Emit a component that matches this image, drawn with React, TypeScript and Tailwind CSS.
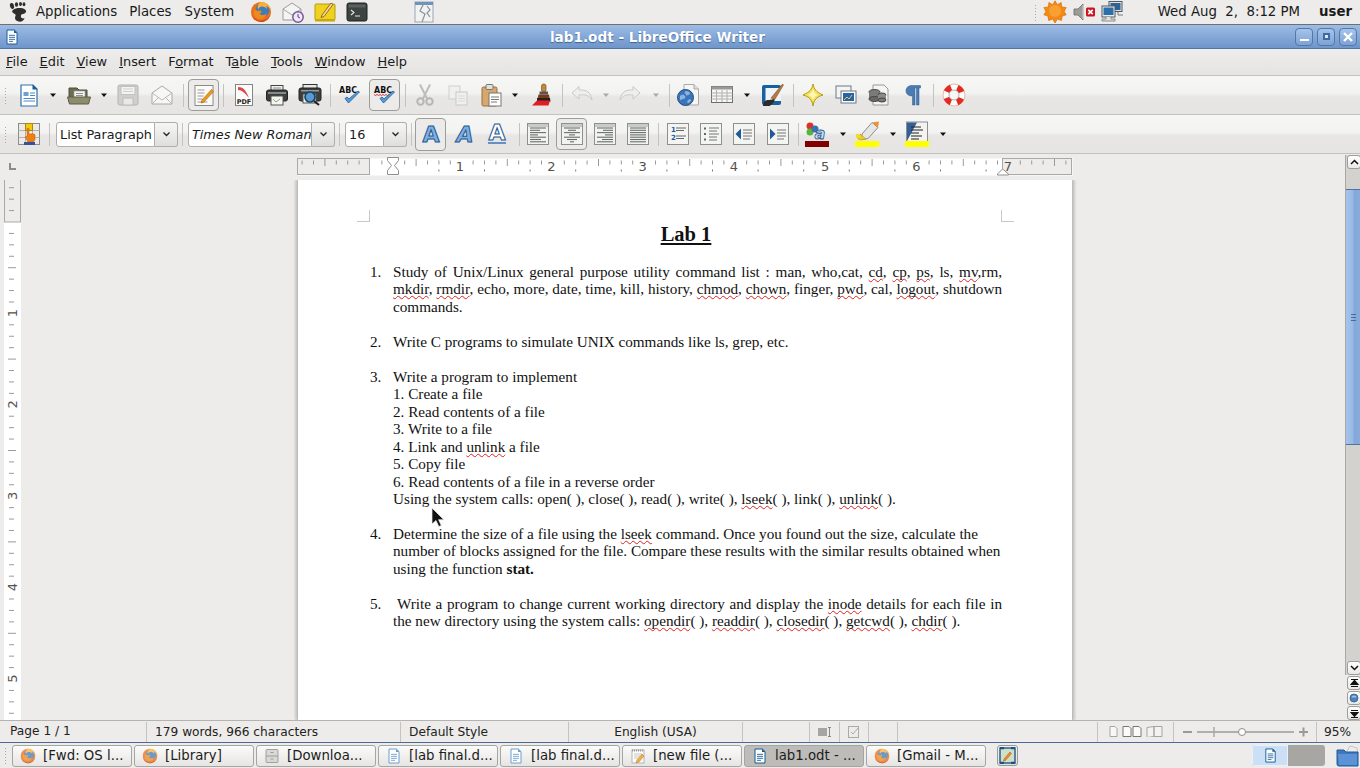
import React from "react";

type P = { className?: string };
const S = ({ className = "", size = 24, children }: { className?: string; size?: number; children: React.ReactNode }) => (
  <svg viewBox="0 0 24 24" width={size} height={size} className={"shrink-0 " + className}>{children}</svg>
);

const Foot = () => (
  <svg viewBox="0 0 20 22" width="20" height="22" className="shrink-0">
    <g fill="#2e2e2c">
      <ellipse cx="3" cy="5" rx="2" ry="3" transform="rotate(-15 3 5)" />
      <ellipse cx="7.5" cy="3.5" rx="1.6" ry="2.3" />
      <ellipse cx="11.5" cy="3" rx="1.5" ry="2.1" />
      <ellipse cx="15" cy="3.2" rx="1.4" ry="2" />
      <path d="M4 9c3-2.5 9-2.5 12-.5 2 1.5 1 4-2 4.5-1.5.3-2.5 1-2 3 .4 1.6 2.5 1.7 3.5 1-.3 2.5-3 4.2-6 3.5-3.5-.8-4-3.5-3-5.5.7-1.4-.5-2-1.5-2.5C3 11.5 2.5 10 4 9z" />
    </g>
  </svg>
);
const Firefox = ({ size = 24, muted = false }: { size?: number; muted?: boolean }) => (
  <svg viewBox="0 0 24 24" width={size} height={size} className={"shrink-0 " + (muted ? "opacity-75" : "")}>
    <circle cx="12" cy="12" r="11" fill="#e8701a" />
    <circle cx="13.500" cy="10" r="7.500" fill="#3f7cbc" />
    <path d="M12 1a11 11 0 0 1 11 9.500c-1.500-3-3.500-4.500-5.500-5 .8 1 1 2 .8 3-1.500-2-3.500-3-6-2.500C10.500 6.500 9 8 9 9.500 7.500 6 8.600 3 12 1z" fill="#f6b23a" />
    <path d="M5 9c2 2 4.500 2 6.500 1.300 1.800 1 .8 3-.8 3.200 1 2.300 5 2.500 7.300 0-.5 4.500-5 7-9 5.800C4.500 18 3 13 5 9z" fill="#f08a1d" />
    <path d="M1.500 15c2 6 8.500 9 13.500 7.500 3.500-1 6-4 7-7.500-2 4-5.500 6.500-10 6.500-4.500 0-8.500-2.500-10.500-6.500z" fill="#c9431a" />
  </svg>
);
const DocIcon = ({ size = 24, stroke = "#1f6aa8", fill = "#fff" }: { size?: number; stroke?: string; fill?: string }) => (
  <S size={size}>
    <path d="M4.500 1.500h11l4 4v17h-15z" fill={fill} stroke={stroke} strokeWidth="1.500" />
    <path d="M15 1l5 5h-5z" fill={stroke} />
    <path d="M7.500 9.500h9M7.500 12.500h9M7.500 15.500h9M7.500 18.500h6" stroke={stroke} strokeWidth="1.300" />
  </S>
);
const MailClock = () => (
  <S>
    <path d="M2 9l9-6 9 6v11H2z" fill="#f4f4f2" stroke="#9a9a98" />
    <path d="M2 9l9 6 9-6" fill="none" stroke="#a5a5a3" />
    <circle cx="17" cy="17" r="5.200" fill="#efe9f5" stroke="#77589c" strokeWidth="1.500" />
    <path d="M17 14v3l2 1" stroke="#5a3f80" fill="none" />
  </S>
);
const NoteIcon = () => (
  <S>
    <rect x="2" y="4" width="20" height="16" rx="1" fill="#eed21f" stroke="#b59c10" />
    <rect x="2" y="19" width="20" height="2.500" fill="#c9a80f" />
    <path d="M9 15l9-12 2 1.500-9 12-3 1z" fill="#f6d98a" stroke="#8f5b22" strokeWidth=".9" />
  </S>
);
const Terminal = () => (
  <S>
    <rect x="2" y="3" width="20" height="18" rx="2" fill="#3d4341" stroke="#1f2322" />
    <rect x="3.500" y="4.500" width="17" height="3" fill="#5b615f" />
    <path d="M6 10l3 2.500-3 2.500M10 16h5" stroke="#e8e8e8" strokeWidth="1.100" fill="none" />
  </S>
);
const WinSwitch = () => (
  <S>
    <rect x="3" y="2" width="18" height="20" fill="#f2f2f0" stroke="#9aa6b4" />
    <rect x="3" y="2" width="18" height="3" fill="#6f93bd" />
    <path d="M12 3L8 11l5 3-3 8M15 6l3 4-3 3 3 4" fill="none" stroke="#8592a0" strokeWidth="1.200" />
  </S>
);
const Sun = () => (
  <S>
    <path d="M12 .8l2.300 4 3.900-2.300.5 4.500 4.500.5-2 4 2 3.300-4 1.200-.8 4.500-4-1.500L12 23l-2.300-4-4 1.500-.8-4.500-4-1.200 2-3.300-2-4 4.500-.5.500-4.500 3.900 2.300z" fill="#f28a14" stroke="#d96f08" strokeWidth=".7" />
    <circle cx="12" cy="11" r="6" fill="#f8a030" />
  </S>
);
const Mute = () => (
  <svg width="24" height="22" viewBox="0 0 24 22" className="shrink-0">
    <path d="M1 8h4l5-5v16l-5-5H1z" fill="#9c9c98" stroke="#6a6a68" strokeWidth=".8" />
    <path d="M10 4v14" stroke="#ddd" />
    <rect x="13" y="6.500" width="9" height="9" rx="1.500" fill="#cc1420" />
    <path d="M15.300 8.800l4.400 4.400M19.700 8.800l-4.400 4.400" stroke="#fff" strokeWidth="1.700" />
  </svg>
);
const Net = () => (
  <S>
    <rect x="8" y="1.500" width="13" height="10" fill="#dfe3e6" stroke="#55585a" />
    <rect x="9.500" y="3" width="10" height="7" fill="#2d6399" />
    <rect x="1" y="6" width="13" height="11" fill="#eceded" stroke="#55585a" />
    <rect x="2.500" y="7.500" width="10" height="7.500" fill="#2d6fa9" />
    <path d="M5 17v2H1v2h13v-2h-4v-2" fill="#e0e0de" stroke="#77797a" strokeWidth=".8" />
    <path d="M17 12v3h5" fill="none" stroke="#77797a" />
  </S>
);

const Grip = ({ className = "" }: P) => (
  <div className={"w-[3px] h-[17px] shrink-0 bg-[radial-gradient(#aaa9a6_0.6px,transparent_0.8px)] bg-[length:3px_3px] " + className} />
);
const Sep = ({ className = "" }: P) => <div className={"w-px h-[23px] bg-[#c4c3c0] shrink-0 " + className} />;
const Arrow = ({ className = "", off = false }: P & { off?: boolean }) => (
  <svg width="8" height="5" viewBox="0 0 8 5" className={"shrink-0 " + className}>
    <path d="M1 0.500h6L4 4z" fill={off ? "#a9a9a7" : "#111"} />
  </svg>
);

const NewDoc = () => (
  <S>
    <path d="M4 2h12l4 4v17H4z" fill="#fff" stroke="#2e70ad" strokeWidth="1.200" />
    <path d="M15.500 1.500l5 5h-5z" fill="#1b5c95" />
    <rect x="6.500" y="9" width="5" height="4" fill="#6da0d0" />
    <path d="M13 10h5M13 12.500h5M6.500 15.500h11.500M6.500 18h11.500" stroke="#4b8bc5" strokeWidth="1.100" />
  </S>
);
const OpenF = () => (
  <S>
    <path d="M2 5h8l2 2h8v12H2z" fill="#6d6d55" stroke="#4e4e3a" />
    <rect x="7" y="8" width="11" height="8" fill="#f4f4f2" stroke="#999" strokeWidth=".6" />
    <path d="M9 10.500h7M9 12.500h7" stroke="#777" strokeWidth=".8" />
    <path d="M.5 14h23l-2 7H2.500z" fill="#8c8c6e" stroke="#5d5d47" />
  </S>
);
const Save = () => (
  <S>
    <rect x="2" y="2" width="20" height="20" rx="2" fill="#cfcfcd" stroke="#b4b4b2" />
    <rect x="5" y="3.500" width="14" height="8" fill="#f3f3f1" stroke="#c2c2c0" />
    <path d="M7 6h10M7 8.500h10" stroke="#d0d0ce" />
    <rect x="7" y="15" width="10" height="7" fill="#e8e8e6" stroke="#bcbcba" />
  </S>
);
const MailS = () => (
  <S>
    <path d="M2 10l10-7 10 7v11H2z" fill="#f7f7f5" stroke="#a8a8a6" />
    <path d="M2 10l10 7 10-7M2 21l7-7M22 21l-7-7" fill="none" stroke="#b8b8b6" />
  </S>
);
const EditDoc = () => (
  <S>
    <rect x="3" y="2.500" width="18" height="20" fill="#fbfbfa" stroke="#8a8a88" />
    <path d="M5.500 7h7M5.500 10h7M5.500 13h6M5.500 16h5M5.500 19h10" stroke="#9b9b99" />
    <path d="M10 17l9.500-10.500 2 2L12 19l-3 1z" fill="#f09a1d" stroke="#a65d0c" strokeWidth=".6" />
  </S>
);
const Pdf = () => (
  <S>
    <rect x="3.500" y="1.500" width="17" height="21" fill="#fcfcfb" stroke="#858583" />
    <path d="M6 4c5 0 8 3 11 11-4-5-7-8-11-8z" fill="#d8242c" opacity=".85" />
    <text x="12" y="20.500" fontSize="6.500" fontWeight="700" textAnchor="middle" fontFamily="DejaVu Sans" fill="#222">PDF</text>
  </S>
);
const Printer = () => (
  <S>
    <rect x="6" y="2.500" width="12" height="7" fill="#f1f1ef" stroke="#444" />
    <path d="M8 5h8" stroke="#888" />
    <rect x="1.500" y="7" width="21" height="11" rx="2" fill="#3b3f3e" stroke="#232525" />
    <rect x="3" y="9" width="18" height="2" fill="#868a88" />
    <rect x="6" y="13" width="12" height="9" fill="#f4f4f2" stroke="#555" />
    <path d="M8 16l3 3 4-3" fill="none" stroke="#7fae6e" />
  </S>
);
const Preview = () => (
  <S>
    <rect x="5" y="1.500" width="14" height="6" fill="#e8e8e6" stroke="#333" />
    <rect x="1" y="5" width="22" height="13" rx="2" fill="#3b3f3e" stroke="#232525" />
    <rect x="3" y="7" width="18" height="1.500" fill="#969a98" />
    <rect x="5" y="11" width="13" height="9" fill="#f4f4f2" stroke="#555" />
    <circle cx="12" cy="14" r="5" fill="#5b9ad0" stroke="#14476f" strokeWidth="1.700" />
    <path d="M16 18l5 4" stroke="#222" strokeWidth="2.200" />
  </S>
);
const Spell = ({ wave = false }: { wave?: boolean }) => (
  <S>
    <text x="10" y="9.500" fontSize="9.500" fontWeight="700" textAnchor="middle" fontFamily="DejaVu Sans" fill="#111" textLength="18" lengthAdjust="spacingAndGlyphs">ABC</text>
    {wave && <path d="M1 11.500l1.500 1 1.500-1 1.500 1 1.500-1 1.500 1 1.500-1 1.500 1 1.500-1 1.500 1 1.500-1" fill="none" stroke="#d22" strokeWidth=".9" />}
    <path d="M7 15.500l3.500 4.500 11-11-1.500-1-9 8-2-2z" fill="#5b9bd8" stroke="#1d5a98" strokeWidth=".8" />
  </S>
);
const Cut = () => (
  <S>
    <path d="M7 1.500l7 14M17 1.500l-7 14" stroke="#bdbdbb" strokeWidth="2" />
    <circle cx="7.500" cy="18.500" r="3.200" fill="none" stroke="#b5b5b3" strokeWidth="2" />
    <circle cx="16.500" cy="18.500" r="3.200" fill="none" stroke="#b5b5b3" strokeWidth="2" />
  </S>
);
const Copy = () => (
  <S>
    <rect x="3" y="3" width="11" height="13" fill="#f0f0ee" stroke="#cfcfcd" />
    <rect x="10" y="9" width="11" height="13" fill="#f0f0ee" stroke="#c8c8c6" />
    <path d="M12 13h7M12 15.500h7M12 18h7" stroke="#d8d8d6" />
  </S>
);
const Paste = () => (
  <S>
    <rect x="3" y="4" width="15" height="19" rx="1.500" fill="#d6a86c" stroke="#96703c" />
    <rect x="7" y="1.500" width="7" height="5" rx="1" fill="#e0e0dc" stroke="#777" />
    <rect x="10" y="10" width="12" height="13" fill="#fff" stroke="#777" />
    <path d="M12 14h8M12 16.500h8M12 19h6" stroke="#777" />
  </S>
);
const Brush = () => (
  <S>
    <rect x="11.500" y="1" width="4.500" height="8" rx="2" fill="#c08a3e" stroke="#7b5520" strokeWidth=".7" />
    <rect x="9.500" y="8.500" width="8.500" height="3" fill="#565656" />
    <path d="M8.500 11.500h10.500l1 7H7z" fill="#7a3a1a" />
    <path d="M7 15h13l.5 3.500H7z" fill="#222" />
    <path d="M2 22.500l5-5h13l-1.500 5z" fill="#e11c22" />
  </S>
);
const Undo = ({ flip = false }: { flip?: boolean }) => (
  <S>
    <g transform={flip ? "translate(24 0) scale(-1 1)" : undefined}>
      <path d="M2 10l7-6.500V7c7-.5 12 2 13 10-3-5-7-5.500-13-5v4z" fill="#efefed" stroke="#c9c9c7" />
    </g>
  </S>
);
const Globe = () => (
  <S>
    <path d="M8 1.500h10l4.500 4.500v16H8z" fill="#f6f6f4" stroke="#aaa" />
    <path d="M18 1.500V6h4.500" fill="#ddd" stroke="#aaa" />
    <circle cx="9.500" cy="14.500" r="8" fill="#3b74b8" stroke="#214c84" />
    <path d="M4 13c2-2 4-1 5 0s0 3-2 3-2 2-3 1zM10 8c2 0 4 1 4 2.500s-2 1-3 2-1-2-2-2 0-2 1-2.500zM12 17c1-1 3-1 3 0s-2 3-3 3-1-2 0-3z" fill="#8fb3dc" />
  </S>
);
const TableI = () => (
  <S>
    <rect x="1.500" y="3.500" width="21" height="16" fill="#f6f6f3" stroke="#6e6e6c" />
    <rect x="1.500" y="3.500" width="21" height="3" fill="#9a9a98" />
    <path d="M1.500 10h21M1.500 13h21M1.500 16h21M6.500 7v12M12 7v12M17 7v12" stroke="#b0b0ae" />
  </S>
);
const Draw = () => (
  <S>
    <rect x="2" y="2" width="19" height="20" rx="2" fill="#1a5fa0" />
    <rect x="5.500" y="5" width="15.500" height="13" fill="#eef3f8" />
    <path d="M11 15L22.500 1l1 1-9 15z" fill="#b57a3c" stroke="#72491e" strokeWidth=".5" />
    <path d="M3 23c0-4 3-6 5-6 3 0 6-1 6-1l.5 2c-2 2-2.500 4-5 5H3z" fill="#2b2b2b" />
  </S>
);
const Star = () => (
  <S>
    <path d="M12 1c1 5 3 8 10 11-7 2-9 5-10 11-1-6-3-9-10-11 7-3 9-6 10-11z" fill="#f5e15c" stroke="#b59a14" />
    <path d="M12 6c.7 3 1.800 4.500 5 6-3 1-4.300 2.500-5 5.500-.7-3-2-4.500-5-5.500 3.200-1.500 4.300-3 5-6z" fill="#fdf6b5" />
  </S>
);
const Nav = () => (
  <S>
    <rect x="2" y="3" width="15" height="12" fill="#f4f4f2" stroke="#6c7a86" />
    <rect x="7" y="8" width="15" height="12" fill="#fbfbfa" stroke="#6c7a86" />
    <rect x="9" y="10" width="11" height="8" fill="#2664a6" />
    <path d="M10 17l3-3 2 2 3-4" stroke="#f2c94c" fill="none" />
  </S>
);
const Db = () => (
  <S>
    <path d="M6 2h11l4 4v16H6z" fill="#f5f5f3" stroke="#999" />
    <ellipse cx="7.500" cy="9" rx="5.500" ry="2.500" fill="#7a7a78" stroke="#444" />
    <rect x="2" y="9" width="11" height="7" fill="#7a7a78" />
    <ellipse cx="7.500" cy="16" rx="5.500" ry="2.500" fill="#666" stroke="#444" />
    <ellipse cx="15" cy="12" rx="4" ry="2" fill="#8a8a88" stroke="#444" />
    <rect x="11" y="12" width="8" height="5" fill="#8a8a88" />
    <ellipse cx="15" cy="17" rx="4" ry="2" fill="#777" stroke="#444" />
  </S>
);
const Pilcrow = () => (
  <S>
    <path d="M11 2.500h8.500V5H18v17h-2.500V5h-1.500v17h-2.500v-9C8 13 5 11.500 5 7.800S8 2.500 11 2.500z" fill="#4a7cb2" stroke="#2a5a8e" strokeWidth=".5" />
  </S>
);
const Help = () => (
  <S>
    <circle cx="12" cy="12" r="11" fill="#fff" stroke="#e8b9a2" strokeWidth="1" />
    <circle cx="12" cy="12" r="8" fill="none" stroke="#e32a20" strokeWidth="6" strokeDasharray="6.280 6.280" strokeDashoffset="3.140" transform="rotate(45 12 12)" />
    <circle cx="12" cy="12" r="5" fill="#f6f6f4" stroke="#999" strokeWidth=".8" />
  </S>
);
const Styles = () => (
  <S>
    <rect x="1.500" y="1.500" width="21" height="21" fill="#eceae6" stroke="#8c8c8a" />
    <path d="M1.500 8.500h21M1.500 15.500h21M8.500 1.500v21M15.500 1.500v21" stroke="#b2b2b0" />
    <rect x="8.500" y="1.500" width="7" height="7" fill="#f1c812" stroke="#a68a08" />
    <path d="M10 9V6.500h2V12h2l1-.5 3 1v5l-1.500 2.500H11L8 15l1-1 1 1z" fill="#f07e16" stroke="#b85c0a" strokeWidth=".5" />
    <rect x="7" y="20" width="11" height="3" fill="#33549a" />
  </S>
);
const BigA = ({ kind }: { kind: "n" | "i" | "u" }) => (
  <S>
    <text x="12" y={kind === "u" ? "18" : "20"} fontSize="22" fontWeight="700" textAnchor="middle" fontFamily="DejaVu Sans" fontStyle={kind === "i" ? "italic" : "normal"} fill={kind === "u" ? "#fff" : "#7fb0e2"} stroke="#23578f" strokeWidth="1">A</text>
    {kind === "u" && <path d="M3 21h18" stroke="#3a76b5" strokeWidth="1.500" />}
  </S>
);
const AlignI = ({ rows }: { rows: [number, number][] }) => (
  <svg width="24" height="24" viewBox="0 0 24 24" className="shrink-0">
    <rect x="1.500" y="1.500" width="21" height="21" fill="#f1f3f0" stroke="#8f8f8d" />
    <rect x="2" y="2" width="20" height="3" fill="#c9cbc8" />
    {rows.map(([a, b], i) => (
      <path key={i} d={`M${a} ${6 + i * 2.3}H${b}`} stroke="#6a6d6b" strokeWidth="1.100" />
    ))}
  </svg>
);
const L: [number, number][] = [[4, 20], [4, 14], [4, 20], [4, 12], [4, 20], [4, 15], [4, 20]];
const C: [number, number][] = [[4, 20], [8, 16], [4, 20], [9, 15], [4, 20], [7, 17], [10, 14]];
const R: [number, number][] = [[4, 20], [10, 20], [4, 20], [12, 20], [4, 20], [9, 20], [4, 20]];
const J: [number, number][] = [[4, 20], [4, 20], [4, 20], [4, 20], [4, 20], [4, 20], [4, 20]];
const ListI = ({ kind }: { kind: "num" | "bul" | "out" | "in" }) => (
  <svg width="24" height="24" viewBox="0 0 24 24" className="shrink-0">
    <rect x="1.500" y="1.500" width="21" height="21" fill="#f3f5f2" stroke="#8f8f8d" />
    {kind === "num" && (
      <g>
        <text x="5" y="10" fontSize="7" fontWeight="700" fontFamily="DejaVu Sans" fill="#1f5a96">1</text>
        <text x="5" y="18" fontSize="7" fontWeight="700" fontFamily="DejaVu Sans" fill="#1f5a96">2</text>
        <path d="M10 6h10M10 8.500h8M10 14h10M10 16.500h8" stroke="#666" />
      </g>
    )}
    {kind === "bul" && (
      <g>
        <path d="M5 6.500h2M5 12h2M5 17.500h2" stroke="#666" strokeWidth="2" />
        <path d="M10 6h10M10 9h8M10 12h10M10 15h8M10 18h8" stroke="#777" />
      </g>
    )}
    {kind === "out" && (
      <g>
        <path d="M9 6.500v11L3.500 12z" fill="#1f5a96" />
        <path d="M11 8h9M11 11h9M11 14h9M11 17h7" stroke="#777" />
      </g>
    )}
    {kind === "in" && (
      <g>
        <path d="M4 6.500v11L9.500 12z" fill="#1f5a96" />
        <path d="M11 8h9M11 11h9M11 14h9M11 17h7" stroke="#777" />
      </g>
    )}
  </svg>
);
const FontColor = () => (
  <svg width="24" height="26" viewBox="0 0 24 26" className="shrink-0">
    <circle cx="5" cy="5" r="3.500" fill="#d5342c" />
    <circle cx="5" cy="11" r="3.500" fill="#5bb43a" />
    <circle cx="10" cy="8" r="3.500" fill="#3c72b5" />
    <text x="15" y="18" fontSize="16" fontWeight="700" textAnchor="middle" fontFamily="DejaVu Sans" fontStyle="italic" fill="#cfe0f2" stroke="#2a5a92" strokeWidth=".8">a</text>
    <rect x="0" y="20" width="24" height="6" fill="#800000" />
  </svg>
);
const Highlight = () => (
  <svg width="24" height="26" viewBox="0 0 24 26" className="shrink-0">
    <path d="M7 13L17 1.500l6 5-10 11-6 1z" fill="#e6e6e4" stroke="#8d8d8b" />
    <path d="M17 1.500l6 5 1-6z" fill="#f09030" />
    <path d="M5 13l6 5-5 1-3-1z" fill="#e8c930" stroke="#b3980e" strokeWidth=".6" />
    <rect x="1" y="13" width="4" height="4" fill="#f0dc20" />
    <rect x="0" y="20" width="24" height="6" fill="#ffff00" />
  </svg>
);
const BgColor = () => (
  <svg width="24" height="26" viewBox="0 0 24 26" className="shrink-0">
    <rect x="1.500" y="1" width="21" height="22" fill="#f3f3f1" stroke="#8f8f8d" />
    <path d="M2 1.500h10L2 20z" fill="#33609a" />
    <path d="M6 6h10M6 9h12M6 12h8M6 15h11M6 18h8" stroke="#222" strokeWidth="1.100" />
    <rect x="0" y="20" width="24" height="6" fill="#ffff00" />
  </svg>
);

const Combo = ({ text, className, italic = false }: { text: string; className: string; italic?: boolean }) => (
  <div className={"flex h-[25px] shrink-0 " + className}>
    <div className={"flex-1 min-w-0 overflow-hidden whitespace-nowrap bg-white border border-[#aeaeab] rounded-l-[3px] pl-[3px] text-[12.800px] leading-[23px] text-[#1a1a1a] " + (italic ? "italic" : "")}>{text}</div>
    <div className="w-[23px] flex items-center justify-center border border-l-0 border-[#aeaeab] rounded-r-[3px] bg-gradient-to-b from-[#f6f6f5] to-[#dededc]">
      <svg width="9" height="6" viewBox="0 0 9 6"><path d="M1.500 1.500L4.500 4.500 7.500 1.500" fill="none" stroke="#222" strokeWidth="1.300" /></svg>
    </div>
  </div>
);
const Pressed = ({ className = "", children }: P & { children: React.ReactNode }) => (
  <div className={"flex items-center justify-center shrink-0 rounded-[4px] border border-[#9c9c99] bg-[#ecebe9] " + className}>{children}</div>
);

const HRuler = () => {
  const ticks: React.ReactNode[] = [];
  const o = 73.5;
  const u = 91.2 / 8;
  for (let i = -6; i <= 62; i++) {
    const x = o + i * u;
    if (x < 3 || x > 772 || i % 8 === 0) continue;
    const half = i % 4 === 0;
    ticks.push(<path key={i} d={`M${x} ${half ? 5 : 6.500}V${half ? 12 : 10.500}`} stroke="#9a9a98" />);
  }
  const tabs = [];
  for (let i = 1; i <= 14; i++) {
    const x = o + 22.8 + (i - 1) * 45.6;
    tabs.push(<path key={i} d={`M${x} 15.500V17.500`} stroke="#777" />);
  }
  return (
    <svg width="776" height="22" viewBox="0 0 776 22" className="block shrink-0">
      <rect x="0.500" y="4.500" width="775" height="17" fill="#fff" stroke="none" />
      <rect x="0.500" y="4.500" width="72" height="16" fill="#edecea" stroke="#aaa9a6" />
      <rect x="705.500" y="4.500" width="69" height="16" fill="#edecea" stroke="#aaa9a6" />
      {ticks}
      {tabs}
      {[1, 2, 3, 4, 5, 6, 7].map((n, i) => (
        <text key={n} x={163 + i * 91.3} y="17" fontSize="13" textAnchor="middle" fontFamily="DejaVu Sans" fill="#55524e">{n}</text>
      ))}
      <path d="M90.500 3.500h11v3l-4 5 4 5v4h-11v-4l4-5-4-5z" fill="#fff" stroke="#8e8e8c" />
      <path d="M705.500 15l-5 5v1h11v-1z" fill="#fff" stroke="#8e8e8c" />
    </svg>
  );
};
const VRuler = () => {
  const ticks: React.ReactNode[] = [];
  const o = 42;
  const u = 91.4 / 8;
  for (let i = -3; i < 44; i++) {
    const y = o + i * u;
    if (i % 8 === 0) continue;
    const half = i % 4 === 0;
    ticks.push(<path key={i} d={`M${half ? 4 : 5} ${y}H${half ? 12 : 10}`} stroke="#9a9a98" />);
  }
  return (
    <svg width="17" height="540" viewBox="0 0 17 540" className="block shrink-0">
      <rect width="17" height="540" fill="#fff" />
      <rect x="0.500" y="-2" width="16" height="44" fill="#edecea" stroke="#aaa9a6" />
      {ticks}
      {[1, 2, 3, 4, 5].map((n, i) => (
        <text key={n} transform={`translate(12.500 ${133 + i * 91.4}) rotate(-90)`} fontSize="13" textAnchor="middle" fontFamily="DejaVu Sans" fill="#55524e">{n}</text>
      ))}
    </svg>
  );
};

const W = ({ children }: { children: React.ReactNode }) => (
  <span className="underline decoration-wavy decoration-[#dd2222] decoration-1 underline-offset-[1px] [text-decoration-skip-ink:none]">{children}</span>
);
const Just = ({ children }: { children: React.ReactNode }) => (
  <div className="text-justify [text-align-last:justify] whitespace-normal">{children}</div>
);
const Item = ({ n, children, className = "" }: { n: string; children: React.ReactNode; className?: string }) => (
  <div className={"flex " + className}>
    <div className="w-[23px] shrink-0">{n}</div>
    <div className="w-[609px] shrink-0">{children}</div>
  </div>
);

const ScrollBtn = ({ children, className = "" }: P & { children: React.ReactNode }) => (
  <div className={"h-[14px] w-[14px] ml-px shrink-0 flex items-center justify-center rounded-[3px] border border-[#9c9c99] bg-gradient-to-b from-white to-[#e8e8e6] " + className}>{children}</div>
);

const TaskBtn = ({ icon, label, active = false, className = "" }: { icon: React.ReactNode; label: string; active?: boolean; className?: string }) => (
  <div className={"w-[120px] h-[22px] shrink-0 rounded-[3px] border border-[#a5a5a2] flex items-center pl-[7px] " + (active ? "bg-[#bdbcb8] " : "bg-gradient-to-b from-[#fbfbfa] to-[#e6e5e3] ") + className}>
    <div className="w-[16px] h-[16px] flex items-center justify-center shrink-0">{icon}</div>
    <span className="ml-[7px] whitespace-nowrap text-[13.300px] leading-[20px] text-[#1c1c1c]">{label}</span>
  </div>
);

const FileCab = () => (
  <svg width="16" height="16" viewBox="0 0 16 16"><rect x="2" y="1.500" width="12" height="13" rx="1" fill="#d8d8d5" stroke="#a0a09d" /><path d="M2 8h12M6.500 4.500h3M6.500 11h3" stroke="#9a9a97" /></svg>
);
const Gedit = () => (
  <svg width="16" height="16" viewBox="0 0 16 16"><rect x="2" y="2" width="12" height="13" fill="#fbfbf9" stroke="#b4b4b2" /><path d="M2 2.500h12" stroke="#999" strokeDasharray="1 1" strokeWidth="2" /><path d="M4 6h8M4 8h6M4 10h4" stroke="#c9c9c6" /><path d="M7 12l5-6 2 2-5 6-3 1z" fill="#f2b04c" stroke="#b87414" strokeWidth=".5" /></svg>
);

function StatusCell({ className = "", children }: { className?: string; children?: React.ReactNode }) {
  return <div className={"h-[20px] shrink-0 border-l border-[#c4c3c0] leading-[20px] " + className}>{children}</div>;
}

export default function App() {
  return (
    <div className="relative w-[1360px] h-[768px] overflow-hidden flex flex-col bg-[#edecea] font-['DejaVu_Sans',sans-serif] text-[#1a1a1a]">
      <svg width="16" height="22" viewBox="0 0 16 22" className="absolute left-[431px] top-[507px] z-10">
        <path d="M1 1v16l4-3.500 2.800 6 2.500-1-2.700-5.800h5.200z" fill="#111" stroke="#eee" strokeWidth=".7" />
      </svg>
      {/* GNOME top panel */}
      <div className="h-[25px] shrink-0 flex items-center border-b border-[#6f6f6c] bg-[#edecea] text-[13.300px]">
        <div className="ml-[9px]"><Foot /></div>
        <span className="ml-[7px]">Applications</span>
        <span className="ml-[12px]">Places</span>
        <span className="ml-[13px]">System</span>
        <div className="ml-[16px]"><Firefox size={22} /></div>
        <div className="ml-[9px]"><MailClock /></div>
        <div className="ml-[8px]"><NoteIcon /></div>
        <div className="ml-[8px]"><Terminal /></div>
        <div className="ml-[43px]"><WinSwitch /></div>
        <div className="ml-auto flex items-center">
          <Grip />
          <div className="ml-[6px]"><Sun /></div>
          <div className="ml-[6px]"><Mute /></div>
          <div className="ml-[4px]"><Net /></div>
          <span className="ml-[33px] whitespace-pre">Wed Aug  2,  8:12 PM</span>
          <span className="ml-[19px] mr-[8px] font-bold">user</span>
        </div>
      </div>
      {/* Title bar */}
      <div className="h-[24px] shrink-0 flex items-center bg-gradient-to-b from-[#9dbce6] to-[#6f95ca] border-b border-[#4d77a9] relative">
        <div className="ml-[4px]"><DocIcon size={16} stroke="#1c5f98" /></div>
        <div className="flex-1 text-center text-[13.600px] font-bold text-white [text-shadow:0_1px_1px_#3d6392] pt-[1px]">lab1.odt - LibreOffice Writer</div>
        <div className="flex gap-[4px] mr-[3px]">
          {[0, 1, 2].map((i) => (
            <div key={i} className="w-[18px] h-[18px] rounded-[4px] border border-[#4f78ab] bg-gradient-to-b from-[#a6c3ea] to-[#7ea2d5] flex items-center justify-center">
              {i === 0 && <div className="w-[9px] h-[2px] bg-white mt-[6px]" />}
              {i === 1 && <div className="w-[7px] h-[7px] border-[2px] border-[#3f6ba3] bg-[#d8e6f6]" />}
              {i === 2 && (
                <svg width="12" height="12" viewBox="0 0 12 12"><path d="M2 2l8 8M10 2l-8 8" stroke="#fff" strokeWidth="2.400" /></svg>
              )}
            </div>
          ))}
        </div>
      </div>
      {/* Menu */}
      <div className="h-[27px] shrink-0 flex items-center gap-[12px] bg-gradient-to-b from-[#eeedeb] to-[#e5e4e2] border-b border-[#c2c1be] text-[12.900px] pl-[6px]">
        <span><u>F</u>ile</span>
        <span><u>E</u>dit</span>
        <span><u>V</u>iew</span>
        <span><u>I</u>nsert</span>
        <span>F<u>o</u>rmat</span>
        <span>T<u>a</u>ble</span>
        <span><u>T</u>ools</span>
        <span><u>W</u>indow</span>
        <span><u>H</u>elp</span>
      </div>
      {/* Standard toolbar */}
      <div className="h-[39px] shrink-0 flex items-center bg-[linear-gradient(#f6f6f5_0%,#f3f3f1_45%,#e7e6e4_55%,#e6e5e3_100%)] border-b border-[#c2c1be]">
        <Grip className="ml-[4px]" />
        <div className="ml-[10px]"><NewDoc /></div>
        <Arrow className="ml-[8px]" />
        <div className="ml-[10px]"><OpenF /></div>
        <Arrow className="ml-[9px]" />
        <div className="ml-[8px]"><Save /></div>
        <div className="ml-[10px]"><MailS /></div>
        <Sep className="ml-[9px]" />
        <Pressed className="w-[31px] h-[32px] ml-[4px]"><EditDoc /></Pressed>
        <Sep className="ml-[4px]" />
        <div className="ml-[8px]"><Pdf /></div>
        <div className="ml-[9px]"><Printer /></div>
        <div className="ml-[9px]"><Preview /></div>
        <Sep className="ml-[8px]" />
        <div className="ml-[7px]"><Spell /></div>
        <Pressed className="w-[31px] h-[32px] ml-[7px]"><Spell wave /></Pressed>
        <Sep className="ml-[5px]" />
        <div className="ml-[7px]"><Cut /></div>
        <div className="ml-[9px]"><Copy /></div>
        <div className="ml-[9px]"><Paste /></div>
        <Arrow className="ml-[8px]" />
        <div className="ml-[11px]"><Brush /></div>
        <Sep className="ml-[8px]" />
        <div className="ml-[7px]"><Undo /></div>
        <Arrow className="ml-[8px]" off />
        <div className="ml-[8px]"><Undo flip /></div>
        <Arrow className="ml-[10px]" off />
        <Sep className="ml-[9px]" />
        <div className="ml-[6px]"><Globe /></div>
        <div className="ml-[10px]"><TableI /></div>
        <Arrow className="ml-[9px]" />
        <div className="ml-[9px]"><Draw /></div>
        <Sep className="ml-[9px]" />
        <div className="ml-[7px]"><Star /></div>
        <div className="ml-[9px]"><Nav /></div>
        <div className="ml-[9px]"><Db /></div>
        <div className="ml-[10px]"><Pilcrow /></div>
        <Sep className="ml-[8px]" />
        <div className="ml-[8px]"><Help /></div>
      </div>
      {/* Formatting toolbar */}
      <div className="h-[39px] shrink-0 flex items-center bg-[linear-gradient(#f6f6f5_0%,#f3f3f1_45%,#e7e6e4_55%,#e6e5e3_100%)] border-b border-[#c2c1be]">
        <Grip className="ml-[4px]" />
        <div className="ml-[10px]"><Styles /></div>
        <Sep className="ml-[8px]" />
        <Combo text="List Paragraph" className="w-[122px] ml-[6px]" />
        <Sep className="ml-[4px]" />
        <Combo text="Times New Roman" className="w-[147px] ml-[5px]" italic />
        <Sep className="ml-[4px]" />
        <Combo text="16" className="w-[62px] ml-[5px]" />
        <Sep className="ml-[4px]" />
        <Pressed className="w-[31px] h-[33px] ml-[3px]"><BigA kind="n" /></Pressed>
        <div className="ml-[7px]"><BigA kind="i" /></div>
        <div className="ml-[8px]"><BigA kind="u" /></div>
        <Sep className="ml-[10px]" />
        <div className="ml-[6px]"><AlignI rows={L} /></div>
        <Pressed className="w-[31px] h-[32px] ml-[6px]"><AlignI rows={C} /></Pressed>
        <div className="ml-[6px]"><AlignI rows={R} /></div>
        <div className="ml-[9px]"><AlignI rows={J} /></div>
        <Sep className="ml-[8px]" />
        <div className="ml-[7px]"><ListI kind="num" /></div>
        <div className="ml-[9px]"><ListI kind="bul" /></div>
        <div className="ml-[9px]"><ListI kind="out" /></div>
        <div className="ml-[10px]"><ListI kind="in" /></div>
        <Sep className="ml-[8px]" />
        <div className="ml-[6px]"><FontColor /></div>
        <Arrow className="ml-[10px]" />
        <div className="ml-[8px]"><Highlight /></div>
        <Arrow className="ml-[10px]" />
        <div className="ml-[8px]"><BgColor /></div>
        <Arrow className="ml-[10px]" />
      </div>
      {/* Work area */}
      <div className="flex h-[566px] shrink-0">
        <div className="w-[1345px] shrink-0 flex flex-col">
          <div className="h-[26px] shrink-0 flex items-start">
            <svg width="8" height="7" viewBox="0 0 8 7" className="ml-[9px] mt-[9px] shrink-0"><path d="M1 0v6h6" fill="none" stroke="#8b8b88" strokeWidth="2" /></svg>
            <div className="ml-[280px]"><HRuler /></div>
          </div>
          <div className="flex h-[540px] overflow-hidden">
            <div className="ml-[4px]"><VRuler /></div>
            <div className="relative ml-[276px] w-[776px] h-[540px] bg-white border-l border-r border-[#bdbcb9] shadow-[-2px_0_2px_#c8c7c4,2px_0_2px_#c8c7c4] font-['Liberation_Serif',serif] text-[15.200px] leading-[17.480px] text-[#111] pt-[43px] pl-[72px]">
              <div className="absolute left-[59px] top-[30px] w-[13px] h-[12px] border-r border-b border-[#c8c8c6]" />
              <div className="absolute left-[703px] top-[30px] w-[13px] h-[12px] border-l border-b border-[#c8c8c6]" />
              <div className="w-[632px] text-center text-[20.500px] leading-[23.300px] font-bold underline">Lab 1</div>
              <div className="h-[16.480px]" />
              <Item n="1.">
                <Just>Study of Unix/Linux general purpose utility command list : man, who,cat, <W>cd</W>, <W>cp</W>, <W>ps</W>, ls, <W>mv</W>,rm,</Just>
                <Just><W>mkdir</W>, <W>rmdir</W>, echo, more, date, time, kill, history, <W>chmod</W>, <W>chown</W>, finger, <W>pwd</W>, cal, <W>logout</W>, shutdown</Just>
                <div>commands.</div>
              </Item>
              <div className="h-[17.480px]" />
              <Item n="2."><div>Write C programs to simulate UNIX commands like ls, grep, etc.</div></Item>
              <div className="h-[17.480px]" />
              <Item n="3.">
                <div>Write a program to implement</div>
                <div>1. Create a file</div>
                <div>2. Read contents of a file</div>
                <div>3. Write to a file</div>
                <div>4. Link and <W>unlink</W> a file</div>
                <div>5. Copy file</div>
                <div>6. Read contents of a file in a reverse order</div>
                <div>Using the system calls: open( ), close( ), read( ), write( ), <W>lseek</W>( ), link( ), <W>unlink</W>( ).</div>
              </Item>
              <div className="h-[17.480px]" />
              <Item n="4.">
                <div>Determine the size of a file using the <W>lseek</W> command. Once you found out the size, calculate the</div>
                <div>number of blocks assigned for the file. Compare these results with the similar results obtained when</div>
                <div>using the function <b>stat.</b></div>
              </Item>
              <div className="h-[17.480px]" />
              <Item n="5.">
                <Just><span className="ml-[4px]">Write a program to change current working directory and display the <W>inode</W> details for each file in</span></Just>
                <div>the new directory using the system calls: <W>opendir</W>( ), <W>readdir</W>( ), <W>closedir</W>( ), <W>getcwd</W>( ), <W>chdir</W>( ).</div>
              </Item>
            </div>
          </div>
        </div>
        {/* Scrollbar */}
        <div className="w-[15px] shrink-0 flex flex-col border-l border-[#a9a8a5] bg-[#d3d2cf] mt-px">
          <ScrollBtn>
            <svg width="9" height="6" viewBox="0 0 9 6"><path d="M1 5L4.500 1.500 8 5" fill="none" stroke="#111" strokeWidth="1.500" /></svg>
          </ScrollBtn>
          <div className="h-[20px] shrink-0" />
          <div className="h-[256px] shrink-0 border-y border-[#4f73a5] bg-[linear-gradient(90deg,#a4c4ec_0%,#98bbe7_45%,#84a8d9_60%,#88abda_100%)] flex flex-col items-center justify-center gap-[2px]">
            <div className="w-[5px] h-px bg-[#4a6a98]" />
            <div className="w-[5px] h-px bg-[#4a6a98]" />
            <div className="w-[5px] h-px bg-[#4a6a98]" />
          </div>
          <div className="flex-1" />
          <ScrollBtn>
            <svg width="9" height="6" viewBox="0 0 9 6"><path d="M1 1L4.500 4.500 8 1" fill="none" stroke="#111" strokeWidth="1.500" /></svg>
          </ScrollBtn>
          <div className="bg-[#edecea] flex flex-col gap-px pt-[1px] ml-[-1px] pl-px">
            <ScrollBtn>
              <svg width="9" height="9" viewBox="0 0 9 9"><path d="M1 0.500h7M4.500 1.500L8 5.500H1zM1 7.500h7" stroke="#111" fill="#111" strokeWidth="1.200" /></svg>
            </ScrollBtn>
            <ScrollBtn>
              <svg width="10" height="10" viewBox="0 0 10 10"><circle cx="5" cy="5" r="4" fill="#4f82b8" stroke="#3e6c9e" /><path d="M2.500 4.500a2.500 2 0 0 1 5 0" fill="#9bc0e4" /></svg>
            </ScrollBtn>
            <ScrollBtn>
              <svg width="9" height="9" viewBox="0 0 9 9"><path d="M1 1.500h7M1 3.500h7L4.500 7.500zM1 8.500h7" stroke="#111" fill="#111" strokeWidth="1.100" /></svg>
            </ScrollBtn>
          </div>
        </div>
      </div>
      {/* Status bar */}
      <div className="h-[23px] shrink-0 flex items-center border-t border-[#b4b3b0] border-b-[1px] border-b-[#4a6b93] bg-[#edecea] text-[12.200px] text-[#222]">
        <div className="w-[146px] shrink-0 pl-[10px]">Page 1 / 1</div>
        <StatusCell className="w-[254px] pl-[8px]">179 words, 966 characters</StatusCell>
        <StatusCell className="w-[168px] pl-[8px]">Default Style</StatusCell>
        <StatusCell className="w-[174px] text-center">English (USA)</StatusCell>
        <StatusCell className="w-[67px]" />
        <StatusCell className="w-[30px] flex items-center justify-center">
          <svg width="13" height="10" viewBox="0 0 13 10"><rect x="0" y="1" width="9" height="8" fill="#a5a5a2" /><path d="M10 0.500h3M11.500 .5v9M10 9.500h3" stroke="#888" /></svg>
        </StatusCell>
        <StatusCell className="w-[29px] flex items-center justify-center">
          <svg width="12" height="12" viewBox="0 0 12 12"><rect x=".5" y=".5" width="10" height="11" fill="none" stroke="#aaa" /><path d="M3 6l2 2 5-6" fill="none" stroke="#aaa" /></svg>
        </StatusCell>
        <StatusCell className="w-[29px]" />
        <StatusCell className="w-[200px]" />
        <StatusCell className="w-[76px] flex items-center pl-[11px]">
          <svg width="56" height="11" viewBox="0 0 56 11" className="shrink-0">
            <path d="M1 .5h5l2 2v8H1z" fill="#f8f8f7" stroke="#a5a5a3" />
            <path d="M14 .5h6l2 2v8h-8zM24 .5h6l2 2v8h-8z" fill="#fbfbfa" stroke="#777775" />
            <path d="M38 1.500l7-1v10l-7 1zM45 .5h8v10h-8z" fill="#f2f2f0" stroke="#a5a5a3" />
          </svg>
        </StatusCell>
        <StatusCell className="w-[143px] flex items-center pl-[9px]">
          <svg width="128" height="14" viewBox="0 0 128 14" className="shrink-0">
            <path d="M0 7h9M116 7h9M120.500 2.500v9" stroke="#9a9a97" strokeWidth="2" />
            <path d="M14 7h97" stroke="#b0afac" strokeWidth="2" />
            <path d="M31 2v10" stroke="#a9a9a6" strokeWidth="1.500" />
            <circle cx="59" cy="7" r="3.500" fill="#fff" stroke="#8e8e8b" />
          </svg>
        </StatusCell>
        <StatusCell className="flex-1 pl-[7px]">95%</StatusCell>
      </div>
      {/* Task bar */}
      <div className="h-[25px] shrink-0 flex items-center bg-[#edecea] relative">
        <Grip className="ml-[4px]" />
        <div className="ml-[5px] flex gap-[2px]">
          <TaskBtn icon={<Firefox size={16} muted />} label="[Fwd: OS l..." />
          <TaskBtn icon={<Firefox size={16} muted />} label="[Library]" />
          <TaskBtn icon={<FileCab />} label="[Downloa..." />
          <TaskBtn icon={<DocIcon size={16} stroke="#6c9ed0" />} label="[lab final.d..." />
          <TaskBtn icon={<DocIcon size={16} stroke="#6c9ed0" />} label="[lab final.d..." />
          <TaskBtn icon={<Gedit />} label="[new file (..." />
          <TaskBtn icon={<DocIcon size={16} stroke="#155a93" />} label="lab1.odt - ..." active />
          <TaskBtn icon={<Firefox size={16} muted />} label="[Gmail - M..." />
        </div>
        <div className="ml-[11px] w-[21px] h-[21px] rounded-[3px] border border-[#9a9a98] bg-gradient-to-b from-[#f3f3f2] to-[#e2e1df] flex items-center justify-center">
          <svg width="17" height="17" viewBox="0 0 17 17">
            <rect x="1" y="1" width="15" height="15" fill="#cfe0c8" stroke="#2f5f93" strokeWidth="1.500" />
            <path d="M1 1h4M12 1h4M1 16h4M12 16h4" stroke="#1f4f85" strokeWidth="2.500" />
            <path d="M5 12l6-7 1.500 1.500-6 7-2 .5z" fill="#f08a2c" stroke="#a85a10" strokeWidth=".5" />
          </svg>
        </div>
        <div className="ml-[234px] flex w-[73px] h-[21px] rounded-[3px] bg-[#a8a6a2] overflow-hidden">
          <div className="w-[36px] h-full bg-[#cbdff5] border border-[#e8f0fa] flex items-center justify-center">
            <DocIcon size={15} stroke="#145c96" />
          </div>
        </div>
        <svg width="24" height="22" viewBox="0 0 24 22" className="ml-[11px] shrink-0">
          <path d="M14 1l7 2 1 5H10z" fill="#ececea" stroke="#aaa" strokeWidth=".6" />
          <path d="M1 5h7l2 2h12v14H3a2 2 0 0 1-2-2z" fill="#3f78be" stroke="#245a9a" />
          <path d="M2 9h19v11H3z" fill="#5b93d6" />
        </svg>
      </div>
    </div>
  );
}
